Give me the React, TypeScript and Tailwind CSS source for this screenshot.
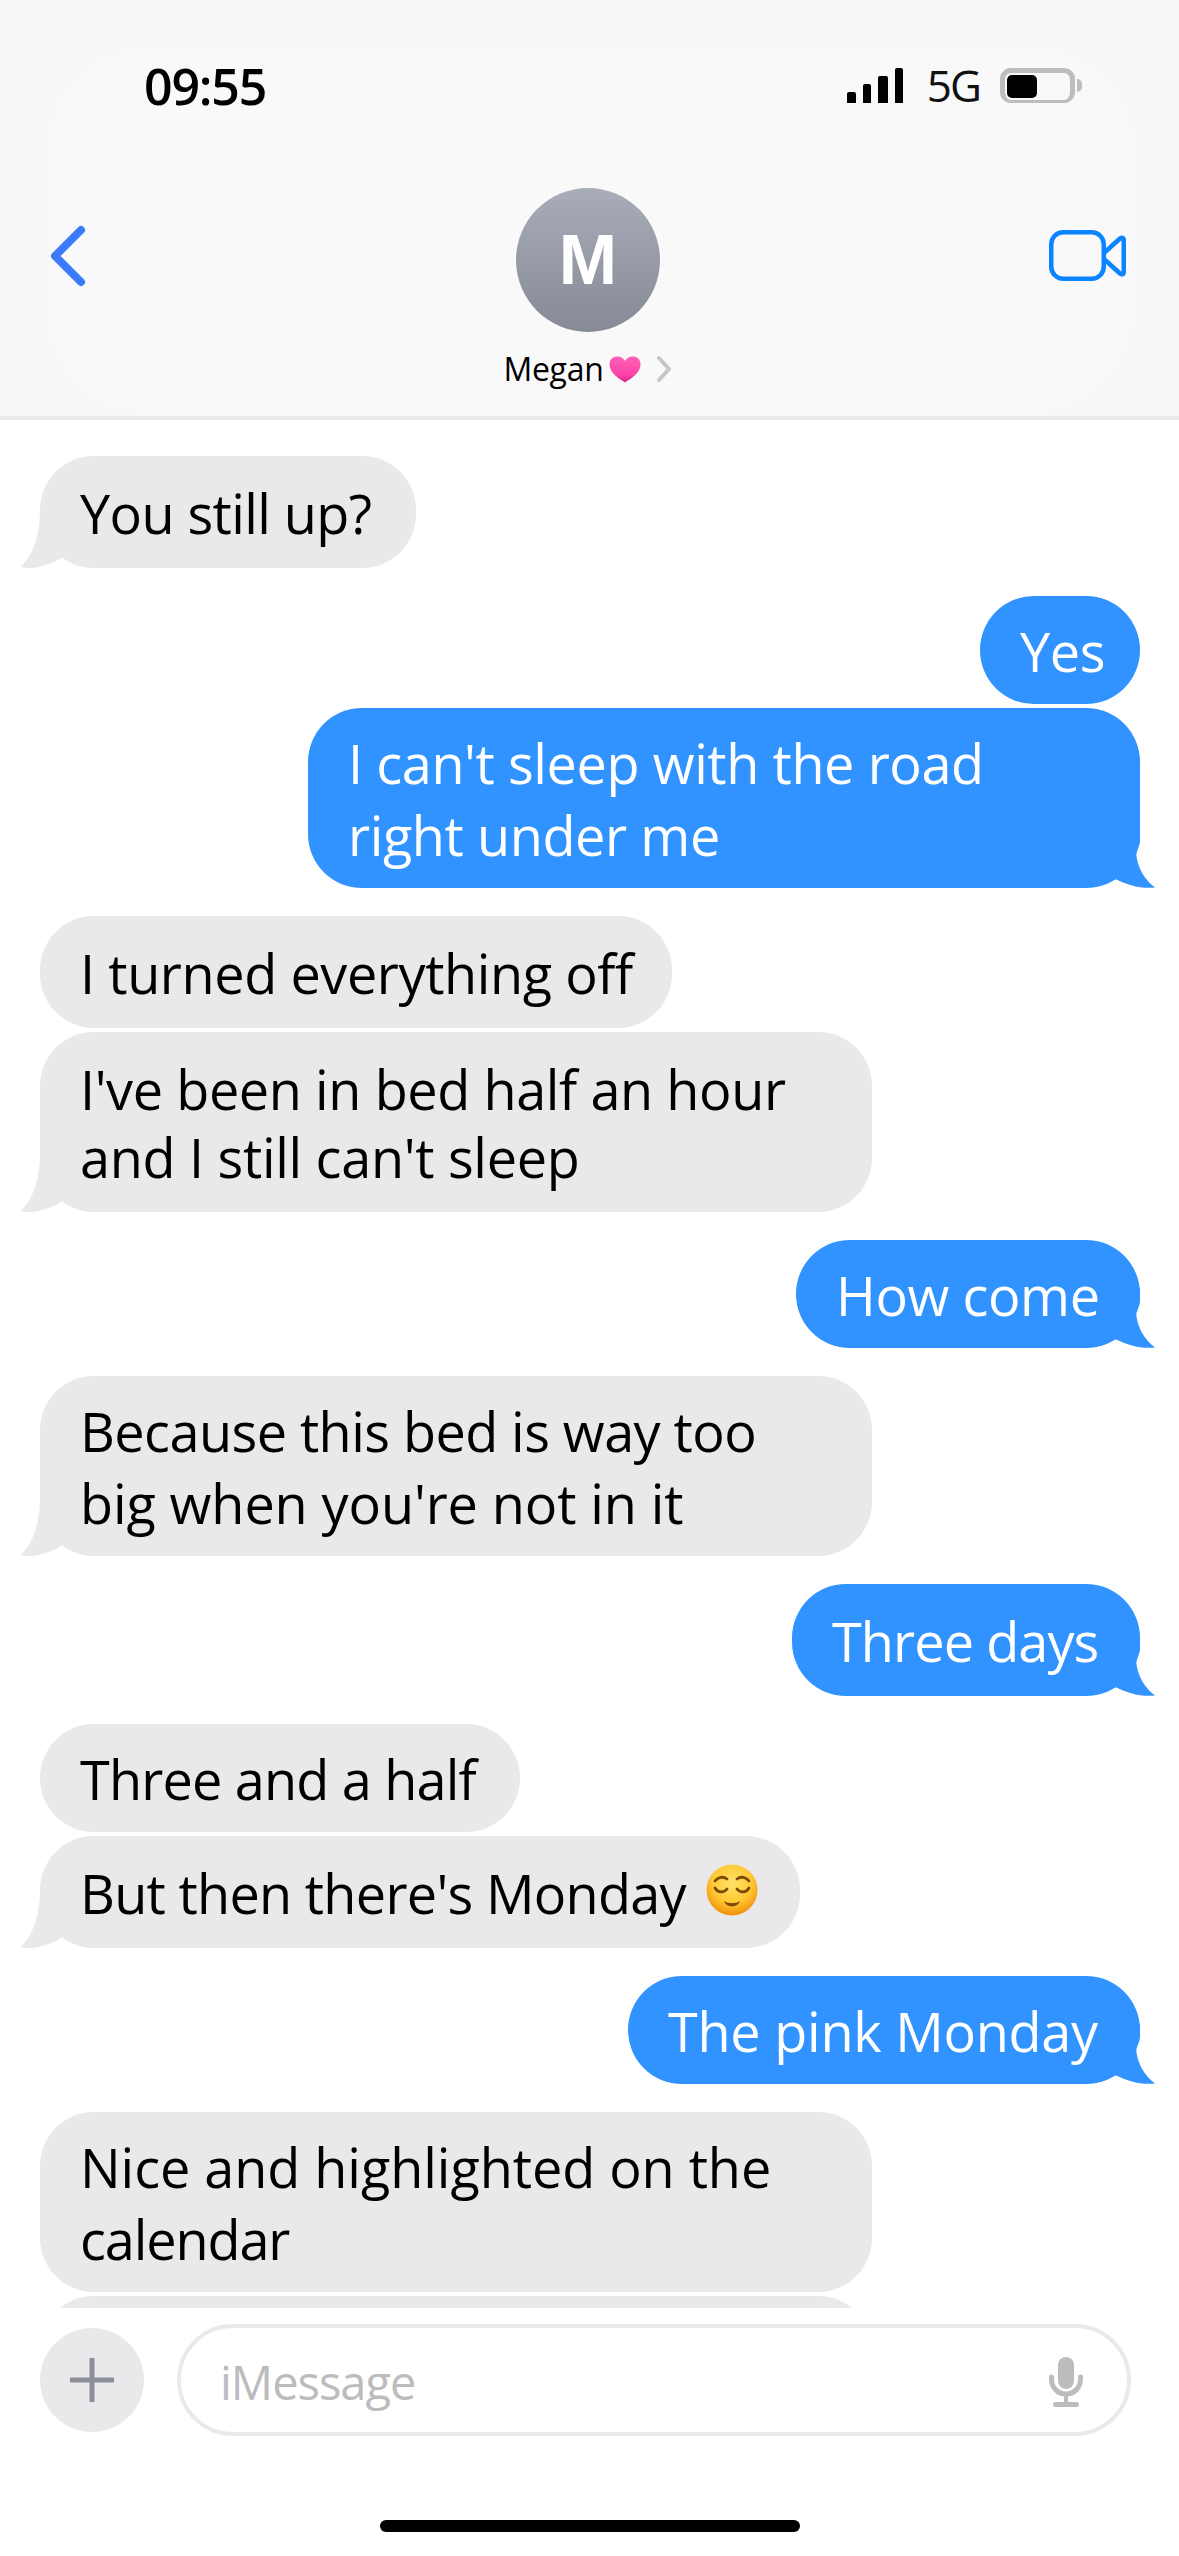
import React from 'react';

interface BubbleProps {
  side: 'in' | 'out';
  box: string;
  tail?: boolean;
  leading?: string;
  children: React.ReactNode;
}

const Bubble: React.FC<BubbleProps> = ({ side, box, tail, leading = 'leading-[72px]', children }) => {
  const colors = side === 'in' ? 'bg-[#e9e9eb] text-black self-start' : 'bg-[#3193ff] text-white self-end';
  return (
    <div className={`relative shrink-0 flex items-center rounded-[54px] px-[40px] whitespace-nowrap ${colors} ${box} ${leading}`}>
      {tail && side === 'in' && (
        <svg className="absolute left-[-19px] bottom-0" width="50" height="60" viewBox="0 0 50 60">
          <path d="M19 0 C19 26 13 46 0 58.5 C1 59.5 3 60 8 60 C20 60 32 55 42 49 L50 49 L50 0 Z" fill="#e9e9eb" />
        </svg>
      )}
      {tail && side === 'out' && (
        <svg className="absolute right-[-15px] bottom-0" width="50" height="60" viewBox="0 0 50 60">
          <path d="M35 0 L35 12 C35 17 33 20 31 24 C32 40 40 52 50 59.5 C36 61 22 57 10 51 L0 51 L0 0 Z" fill="#3193ff" />
        </svg>
      )}
      <div className="pt-[2px]">{children}</div>
    </div>
  );
};

const RelievedFace = () => (
  <svg className="absolute right-[42px] top-[28px]" width="52" height="52" viewBox="0 0 52 52">
    <defs>
      <radialGradient id="faceFill" cx="50%" cy="36%" r="64%">
        <stop offset="0%" stopColor="#ffe36a" />
        <stop offset="60%" stopColor="#ffc933" />
        <stop offset="100%" stopColor="#f08e0c" />
      </radialGradient>
    </defs>
    <circle cx="26" cy="26" r="25.5" fill="url(#faceFill)" />
    <g fill="none" stroke="#7c4a05" strokeLinecap="round" strokeWidth="2.8">
      <path d="M9 17 C12 13 17 12 21 15" />
      <path d="M43 17 C40 13 35 12 31 15" />
      <path d="M9 24 C12 29 18 29 21 25" />
      <path d="M43 24 C40 29 34 29 31 25" />
    </g>
    <path d="M18 37 C22 40 30 40 34 37 C32 44 20 44 18 37 Z" fill="#7c4a05" />
  </svg>
);

const Heart = () => (
  <svg width="32" height="27" viewBox="0 0 32 27" className="ml-[5px]">
    <defs>
      <linearGradient id="heartFill" x1="0" y1="0" x2="0" y2="1">
        <stop offset="0%" stopColor="#ff62b6" />
        <stop offset="65%" stopColor="#fb45a8" />
        <stop offset="100%" stopColor="#dc2a90" />
      </linearGradient>
    </defs>
    <path d="M16 26.5 C8 21.5 0.5 16 0.5 8.5 C0.5 3 4 0.5 8.5 0.5 C12 0.5 14.5 2.5 16 5 C17.5 2.5 20 0.5 23.5 0.5 C28 0.5 31.5 3 31.5 8.5 C31.5 16 24 21.5 16 26.5 Z" fill="url(#heartFill)" />
  </svg>
);

export default function App() {
  return (
    <div className="w-[1179px] h-[2556px] bg-white flex flex-col overflow-hidden font-['Open_Sans','Noto_Sans',sans-serif]">
      <header className="relative isolate shrink-0 h-[420px] bg-[#f8f8f8] border-b-4 border-[#e9e9eb] flex flex-col">
        <div className="absolute -z-10 left-[50px] right-[49px] top-[50px] bottom-[6px] rounded-[100px] bg-[#f9f9f9]" />
        <div className="flex items-start justify-between pt-[62px] pl-[144px] pr-[97px] h-[188px]">
          <span className="text-[50px] leading-[48px] font-semibold tracking-[-1.2px] text-black">09:55</span>
          <div className="flex items-start pt-[6px]">
            <div className="flex items-end gap-[7px] h-[35px]">
              <div className="w-[9px] h-[11px] bg-black rounded-t-[2px]" />
              <div className="w-[8px] h-[19px] bg-black rounded-t-[2px]" />
              <div className="w-[10px] h-[27px] bg-black rounded-t-[2px]" />
              <div className="w-[8px] h-[35px] bg-black rounded-t-[2px]" />
            </div>
            <span className="ml-[24px] text-[44px] leading-[34px] tracking-[-2px] text-[#111]">5G</span>
            <div className="ml-[20px] w-[75px] h-[35px] border-[5px] border-b-[3px] border-[#bdbdbd] rounded-[11px] p-[2px]">
              <div className="w-[30px] h-full bg-black rounded-[5px]" />
            </div>
            <div className="mt-[11px] ml-[2px] w-[5px] h-[13px] bg-[#bdbdbd] rounded-r-full" />
          </div>
        </div>
        <div className="flex flex-col items-center pr-[3px]">
          <div className="w-[144px] h-[144px] rounded-full bg-gradient-to-b from-[#a9adba] to-[#868a95] flex items-center justify-center">
            <span className="text-white text-[70px] leading-none font-bold font-['Liberation_Sans',sans-serif]">M</span>
          </div>
          <div className="mt-[19px] flex items-center h-[36px]">
            <span className="text-[32px] leading-[36px] tracking-[-0.3px] text-black">Megan</span>
            <Heart />
            <svg width="18" height="28" viewBox="0 0 18 28" className="ml-[14px]">
              <path d="M4 3 L14 14 L4 25" fill="none" stroke="#c6c6c8" strokeWidth="4" strokeLinecap="round" strokeLinejoin="round" />
            </svg>
          </div>
        </div>
        <svg className="absolute left-[46px] top-[224px]" width="44" height="64" viewBox="0 0 44 64">
          <path d="M35 6 L9 32 L35 58" fill="none" stroke="#3b7bfb" strokeWidth="8" strokeLinecap="round" strokeLinejoin="round" />
        </svg>
        <svg className="absolute right-[52px] top-[230px]" width="78" height="52" viewBox="0 0 78 52">
          <rect x="2.25" y="2.25" width="52.5" height="46.5" rx="12" fill="none" stroke="#0a84ff" strokeWidth="4.5" />
          <path d="M56 22 L71 8.5 C73 7 74.75 7.5 74.75 10 L74.75 42 C74.75 44.5 73 45 71 43.5 L56 30" fill="none" stroke="#0a84ff" strokeWidth="4.5" strokeLinejoin="round" strokeLinecap="round" />
        </svg>
      </header>

      <main className="shrink-0 h-[1888px] overflow-hidden flex flex-col pl-[40px] pr-[39px] text-[54px] tracking-[-0.4px]">
        <Bubble side="in" tail box="mt-[36px] w-[376px] h-[112px]"><span className="tracking-[-0.6px]">You still up?</span></Bubble>
        <Bubble side="out" box="mt-[28px] w-[160px] h-[108px]">Yes</Bubble>
        <Bubble side="out" tail box="mt-[4px] w-[832px] h-[180px]">I can't sleep with the road<br />right under me</Bubble>
        <Bubble side="in" box="mt-[28px] w-[632px] h-[112px]">I turned everything off</Bubble>
        <Bubble side="in" tail leading="leading-[68px]" box="mt-[4px] w-[832px] h-[180px]">I've been in bed half an hour<br /><span className="tracking-[-0.3px]">and I still can't sleep</span></Bubble>
        <Bubble side="out" tail box="mt-[28px] w-[344px] h-[108px]">How come</Bubble>
        <Bubble side="in" tail box="mt-[28px] w-[832px] h-[180px]"><span className="tracking-[-0.55px]">Because this bed is way too</span><br /><span className="tracking-[-0.1px]">big when you're not in it</span></Bubble>
        <Bubble side="out" tail box="mt-[28px] w-[348px] h-[112px]"><span className="tracking-[-0.9px]">Three days</span></Bubble>
        <Bubble side="in" box="mt-[28px] w-[480px] h-[108px]"><span className="tracking-[-0.8px]">Three and a half</span></Bubble>
        <Bubble side="in" tail box="mt-[4px] w-[760px] h-[112px]">
          <span className="tracking-[-0.7px]">But then there's Monday</span>
          <RelievedFace />
        </Bubble>
        <Bubble side="out" tail box="mt-[28px] w-[512px] h-[108px]"><span className="tracking-[-0.25px]">The pink Monday</span></Bubble>
        <Bubble side="in" box="mt-[28px] w-[832px] h-[180px]"><span className="tracking-[-0.05px]">Nice and highlighted on the</span><br /><span className="tracking-[-1.1px]">calendar</span></Bubble>
        <Bubble side="in" box="mt-[4px] w-[832px] h-[112px]">{' '}</Bubble>
      </main>

      <footer className="flex-1 flex flex-col">
        <div className="flex items-center pt-[16px] pl-[40px] pr-[48px]">
          <div className="shrink-0 w-[104px] h-[104px] rounded-full bg-[#e9e9eb] flex items-center justify-center">
            <svg width="44" height="44" viewBox="0 0 44 44">
              <path d="M22 1 V43 M1 22 H43" fill="none" stroke="#8a8e97" strokeWidth="5" strokeLinecap="round" />
            </svg>
          </div>
          <div className="ml-[33px] flex-1 h-[112px] rounded-full border-4 border-[#e9e9eb] flex items-center justify-between pl-[39px] pr-[44px]">
            <span className="mt-[4px] text-[47px] text-[#bcbcbe] tracking-[-1px]">iMessage</span>
            <svg className="mt-[4px]" width="34" height="50" viewBox="0 0 34 50">
              <rect x="9" y="0" width="16" height="32" rx="8" fill="#bcbcbc" />
              <path d="M2.5 20 V22 C2.5 31 9 37 17 37 C25 37 31.5 31 31.5 22 V20" fill="none" stroke="#bcbcbc" strokeWidth="5" strokeLinecap="round" />
              <path d="M17 37 V46" stroke="#bcbcbc" strokeWidth="4" />
              <rect x="4" y="45" width="26" height="5" rx="2.5" fill="#bcbcbc" />
            </svg>
          </div>
        </div>
        <div className="mt-[84px] mx-auto w-[420px] h-[12px] rounded-full bg-black" />
      </footer>
    </div>
  );
}
